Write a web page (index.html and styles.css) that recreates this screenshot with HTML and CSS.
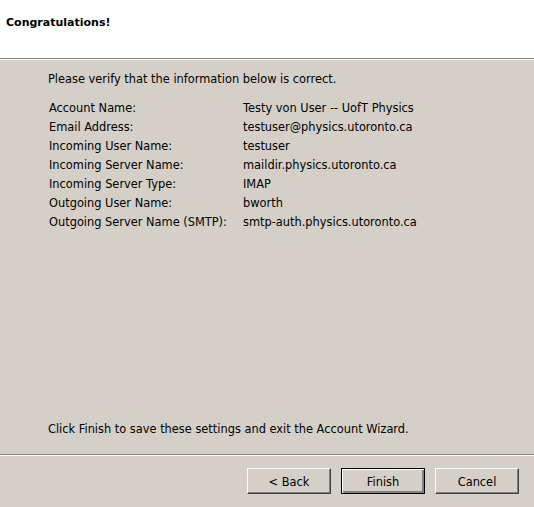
FILE: index.html
```html
<!DOCTYPE html>
<html lang="en">
<head>
  <meta charset="utf-8">
  <title>Account Wizard</title>
  <link rel="stylesheet" href="styles.css">
</head>
<body>

  <div class="wizard">
    <!-- Page header -->
    <div class="header">
      <h1>Congratulations!</h1>
    </div>
    <div class="rule"></div>

    <!-- Summary of settings -->
    <div class="content">
      <p class="intro">Please verify that the information below is correct.</p>
      <div class="summary">
        <span>Account Name:</span><span>Testy von User -- UofT Physics</span>
        <span>Email Address:</span><span>testuser@physics.utoronto.ca</span>
        <span>Incoming User Name:</span><span>testuser</span>
        <span>Incoming Server Name:</span><span>maildir.physics.utoronto.ca</span>
        <span>Incoming Server Type:</span><span>IMAP</span>
        <span>Outgoing User Name:</span><span>bworth</span>
        <span>Outgoing Server Name (SMTP):</span><span>smtp-auth.physics.utoronto.ca</span>
      </div>
      <p class="note">Click Finish to save these settings and exit the Account Wizard.</p>
    </div>
    <div class="rule"></div>

    <!-- Buttons -->
    <div class="buttons">
      <button>&lt; Back</button>
      <button class="default">Finish</button>
      <button>Cancel</button>
    </div>
  </div>

</body>
</html>
```

FILE: styles.css
```css
* {
  font-family: 'DejaVu Sans', Verdana, sans-serif;
  box-sizing: border-box;
}

body {
  margin: 0;
  background-color: #d4d0c8;
  color: #000;
  font-size: 11.4px;
}

.wizard {
  display: flex;
  flex-direction: column;
  height: 507px;
}

.header {
  height: 58px;
  flex: none;
  background-color: #fff;
  padding: 16px 6px 0;
}

.header h1 {
  margin: 0;
  font-size: 11px;
  font-weight: bold;
  line-height: 13px;
}

.rule {
  flex: none;
  border-top: 1px solid #808080;
  border-bottom: 1px solid #fff;
}

.content {
  flex: 1;
  display: flex;
  flex-direction: column;
  padding: 13px 0 18px 48px;
  line-height: 13px;
}

.intro {
  margin: 0 0 16px;
}

.summary {
  display: grid;
  grid-template-columns: 194px auto;
  row-gap: 6px;
  padding-left: 1px;
}

.note {
  margin: auto 0 0;
}

.buttons {
  flex: none;
  height: 51px;
  display: flex;
  justify-content: flex-end;
  align-items: flex-start;
  gap: 10px;
  padding: 12px 15px 0 0;
}

button {
  width: 84px;
  height: 26px;
  font-size: 11.4px;
  color: #000;
  background-color: #d4d0c8;
  border: 1px solid;
  border-color: #fff #404040 #404040 #fff;
  box-shadow: inset -1px -1px #808080;
  padding: 1px 0 0;
}

button.default {
  border-color: #000;
  box-shadow: inset 1px 1px #fff, inset -2px -2px #808080;
}
```
